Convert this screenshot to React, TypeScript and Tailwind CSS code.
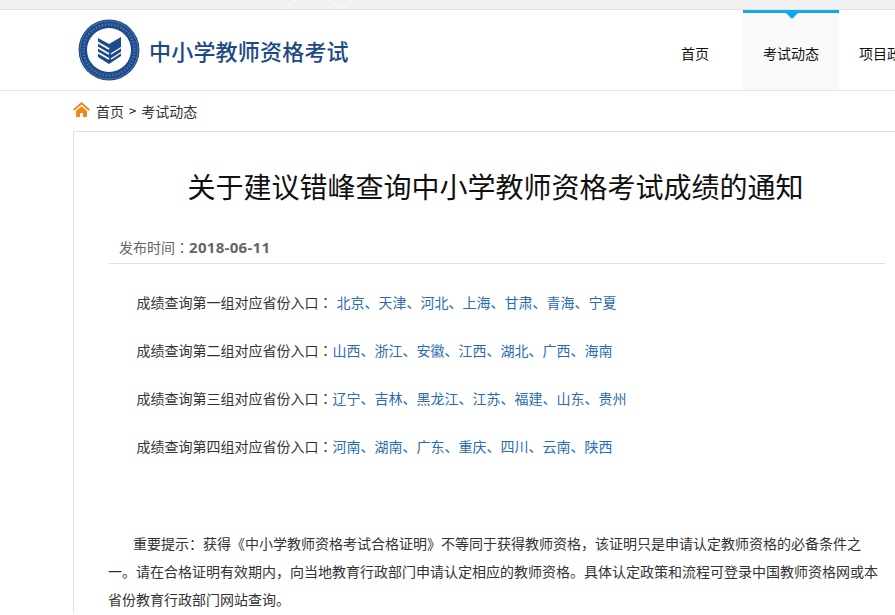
import React from 'react';

const groups = [
  { name: '成绩查询第一组对应省份入口', gap: true, list: '北京、天津、河北、上海、甘肃、青海、宁夏' },
  { name: '成绩查询第二组对应省份入口', gap: false, list: '山西、浙江、安徽、江西、湖北、广西、海南' },
  { name: '成绩查询第三组对应省份入口', gap: false, list: '辽宁、吉林、黑龙江、江苏、福建、山东、贵州' },
  { name: '成绩查询第四组对应省份入口', gap: false, list: '河南、湖南、广东、重庆、四川、云南、陕西' },
];

// the reference font centers its colon, the TC cut does too
const Colon = () => <span className="font-['Noto_Sans_CJK_TC',sans-serif]">：</span>;

const Logo = () => (
  <svg width="62" height="62" viewBox="0 0 62 62" className="shrink-0">
    <circle cx="31" cy="31" r="30.5" fill="#1d4a8a" />
    <circle cx="31" cy="31" r="29" fill="none" stroke="#6f8fb8" strokeWidth="0.6" />
    <circle cx="31" cy="31" r="25.5" fill="none" stroke="#4f74a6" strokeWidth="2.5" strokeDasharray="1.4 1.8" />
    <circle cx="31" cy="31" r="22" fill="#fff" />
    <path d="M20 19 L31 25 L43 18 V37 L31 45 L20 38 Z" fill="#1d4a8a" />
    <path d="M19 23 L31 30 M19 28 L31 35 M19 33 L31 40" stroke="#fff" strokeWidth="1.8" fill="none" />
    <path d="M33 35 L44 28 M33 40 L44 33" stroke="#fff" strokeWidth="1.4" fill="none" />
  </svg>
);

const HomeIcon = () => (
  <svg width="17" height="15" viewBox="0 0 17 15" className="shrink-0 -mt-[3px]">
    <path d="M0 7.5 L8.5 0 L17 7.5 L15.6 8.8 L8.5 2.6 L1.4 8.8 Z" fill="#f08519" />
    <path d="M3 9 L8.5 4.2 L14 9 V15 H10 V11 H7 V15 H3 Z" fill="#f08519" />
  </svg>
);

export default function App() {
  return (
    <div className="w-[895px] h-[615px] overflow-hidden bg-white font-['Noto_Sans_CJK_SC','Noto_Sans',sans-serif] text-[14px] text-[#333]">
      <div className="h-[10px] bg-[#f1f1f1] border-b border-[#e2e2e2] pl-[280px] overflow-hidden">
        <svg width="80" height="9" viewBox="0 0 80 9">
          <path d="M5 9 L15 0 M50 0 L61 9 L73 0" stroke="#f8f8f8" strokeWidth="1.5" fill="none" />
        </svg>
      </div>

      <header className="h-[81px] border-b border-[#e5e5e5] flex pl-[78px]">
        <div className="flex items-center gap-[9px] w-[569px] shrink-0 -mt-[1px]">
          <Logo />
          <span className="text-[22px] font-medium text-[#1d4a84] leading-none whitespace-nowrap tracking-[0.2px]">中小学教师资格考试</span>
        </div>
        <nav className="flex text-[#111] shrink-0">
          <a className="w-[96px] flex items-center justify-center pt-[7px]">首页</a>
          <a className="relative w-[96px] flex items-center justify-center bg-[#f9f9f9] border-t-[3px] border-[#0ea9e8] pt-[4px]">
            考试动态
            <span className="absolute top-0 left-[43px] w-0 h-0 border-x-[6px] border-x-transparent border-t-[6px] border-t-[#0ea9e8]" />
          </a>
          <a className="w-[96px] flex items-center justify-center pt-[7px] whitespace-nowrap">项目政策</a>
        </nav>
      </header>

      <div className="h-[40px] pl-[73px] flex items-center">
        <HomeIcon />
        <span className="ml-[6px]">首页</span>
        <span className="text-[#111] text-[13px] ml-[5px]">&gt;</span>
        <span className="ml-[5px]">考试动态</span>
      </div>

      <main className="ml-[73px] w-[847px] border-l border-t border-[#dedede] px-[35px]">
        <h1 className="text-[28px] leading-[40px] font-normal text-[#111] text-center mt-[34px] -ml-[3px] whitespace-nowrap">
          关于建议错峰查询中小学教师资格考试成绩的通知
        </h1>
        <div className="mt-[27px] h-[31px] border-b border-[#dfdfdf] pl-[10px] pt-[4px] text-[#666] leading-[20px]">
          发布时间<Colon /><span className="font-['Open_Sans',sans-serif] font-bold text-[15px] tracking-[0.3px]">2018-06-11</span>
        </div>

        <div className="mt-[24px] flex flex-col gap-[20px]">
          {groups.map((g) => (
            <p key={g.name} className="leading-[28px] pl-[27.5px] whitespace-nowrap">
              {g.name}<Colon />
              <span className={g.gap ? 'text-[#2b6cb0] pl-[4px]' : 'text-[#2b6cb0]'}>{g.list}</span>
            </p>
          ))}
        </div>

        <p className="mt-[69px] leading-[28px] indent-[25px] -ml-[1px]">
          重要提示：获得《中小学教师资格考试合格证明》不等同于获得教师资格，该证明只是申请认定教师资格的必备条件之一。请在合格证明有效期内，向当地教育行政部门申请认定相应的教师资格。具体认定政策和流程可登录中国教师资格网或本省份教育行政部门网站查询。
        </p>
      </main>
    </div>
  );
}
